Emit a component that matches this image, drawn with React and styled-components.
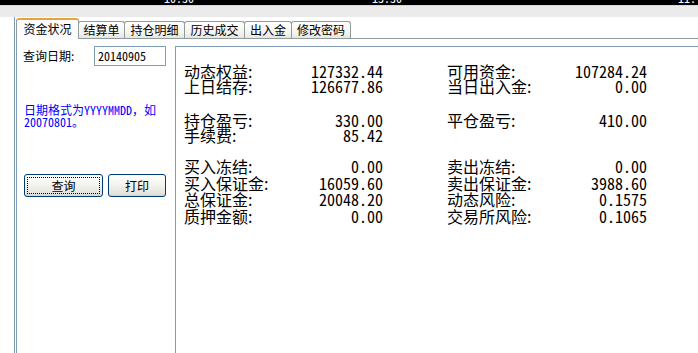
import React from "react";
import styled, { createGlobalStyle } from "styled-components";

const CJK = `"Noto Sans CJK SC", "Noto Sans", sans-serif`;
const MONO = `"Noto Sans Mono CJK SC", "Liberation Mono", monospace`;

const GlobalStyle = createGlobalStyle`
	html, body {
		margin: 0;
		padding: 0;
		background: #fff;
		overflow: hidden;
	}
	body {
		font-family: ${CJK};
	}
`;

const Screen = styled.div`
	width: 698px;
	height: 353px;
	display: flex;
	flex-direction: column;
	overflow: hidden;
	background: #fff;
`;

const ChartStrip = styled.div`
	height: 5px;
	background: #000;
	overflow: hidden;
	display: flex;
	flex-shrink: 0;
`;

const AxisLabel = styled.span`
	color: #fff;
	font: 12px/12px ${MONO};
	margin-top: -8px;
	margin-left: ${props => props.$left}px;
`;

const GreyBand = styled.div`
	height: 12px;
	flex-shrink: 0;
	background: #ebebeb;
	border-top: 1px solid #d8d8d8;
	box-sizing: border-box;
`;

const Frame = styled.div`
	flex: 1;
	display: flex;
	margin-left: 14px;
	border-left: 1px solid #7f9db9;
	padding-left: 1px;
`;

const TabControl = styled.div`
	flex: 1;
	display: flex;
	flex-direction: column;
`;

const TabStrip = styled.div`
	height: 21px;
	display: flex;
	align-items: flex-end;
	border-bottom: 1px solid #919b9c;
	flex-shrink: 0;
`;

const Tab = styled.div`
	box-sizing: border-box;
	width: ${props => props.$width}px;
	height: ${props => (props.$active ? 21 : 17)}px;
	margin-bottom: ${props => (props.$active ? -1 : 0)}px;
	display: flex;
	align-items: center;
	justify-content: center;
	font: 12px/12px ${CJK};
	color: #000;
	border: 1px solid #919b9c;
	border-bottom: none;
	border-radius: 3px 3px 0 0;
	background: ${props =>
		props.$active ? "#fcfcfe" : "linear-gradient(#ffffff, #f3f3ef 70%, #e6e6e0)"};
	${props =>
		props.$active
			? `border-top: 2px solid #e8a23c;
			padding-bottom: 1px;
			z-index: 1;`
			: `margin-left: -1px;`};
`;

const TabPage = styled.div`
	flex: 1;
	display: flex;
	border-left: 1px solid #7f9db9;
`;

const QueryPanel = styled.div`
	width: 158px;
	flex-shrink: 0;
	display: flex;
	flex-direction: column;
	padding: 7px 0 0 6px;
	box-sizing: border-box;
`;

const DateRow = styled.div`
	display: flex;
	align-items: center;
	height: 20px;
`;

const FieldLabel = styled.span`
	font: 12px/12px ${CJK};
	color: #000;
	width: 71px;
`;

const DateInput = styled.div`
	box-sizing: border-box;
	width: 72px;
	height: 20px;
	border: 1px solid #7f9db9;
	padding-left: 3px;
	font: 12px/18px ${MONO};
	color: #000;
	background: #fff;
`;

const Hint = styled.div`
	margin-top: 38px;
	margin-left: 1px;
	color: #0000ff;
	font: 12px/12px ${CJK};
`;

const HintMono = styled.span`
	font-family: ${MONO};
`;

const ButtonRow = styled.div`
	display: flex;
	gap: 5px;
	margin-top: 46px;
	margin-left: 1px;
`;

const Button = styled.div`
	position: relative;
	box-sizing: border-box;
	width: ${props => props.$width}px;
	height: 23px;
	border: 1px solid #003c74;
	border-radius: 3px;
	background: linear-gradient(#ffffff, #f4f4f0 45%, #e3e3db 90%, #d6d0c5);
	display: flex;
	align-items: center;
	justify-content: center;
	font: 12px/12px ${CJK};
	color: #000;
	${props =>
		props.$focused
			? `&::after {
				content: "";
				position: absolute;
				inset: 2px;
				border: 1px dotted #000;
			}`
			: ""};
`;

const SummaryPanel = styled.div`
	flex: 1;
	margin-top: 7px;
	border-left: 1px solid #7f9db9;
	border-top: 1px solid #7f9db9;
	padding: 17px 0 0 8px;
`;

const Group = styled.div`
	display: grid;
	grid-template-columns: 110px 89px 64px 110px 90px;
	grid-auto-rows: ${props => props.$row}px;
	margin-top: ${props => props.$gap}px;
`;

const Label = styled.span`
	font: 16px/${props => props.$row}px ${CJK};
	color: #000;
	white-space: nowrap;
`;

const Value = styled.span`
	font: 16px/${props => props.$row}px ${MONO};
	color: #000;
	text-align: right;
	white-space: nowrap;
`;

const groups = [
	{
		gap: 0,
		row: 15,
		rows: [
			["动态权益:", "127332.44", "可用资金:", "107284.24"],
			["上日结存:", "126677.86", "当日出入金:", "0.00"],
		],
	},
	{
		gap: 19,
		row: 15,
		rows: [
			["持仓盈亏:", "330.00", "平仓盈亏:", "410.00"],
			["手续费:", "85.42", "", ""],
		],
	},
	{
		gap: 15,
		row: 16.5,
		rows: [
			["买入冻结:", "0.00", "卖出冻结:", "0.00"],
			["买入保证金:", "16059.60", "卖出保证金:", "3988.60"],
			["总保证金:", "20048.20", "动态风险:", "0.1575"],
			["质押金额:", "0.00", "交易所风险:", "0.1065"],
		],
	},
];

const tabs = [
	{ name: "资金状况", width: 63 },
	{ name: "结算单", width: 47 },
	{ name: "持仓明细", width: 61 },
	{ name: "历史成交", width: 61 },
	{ name: "出入金", width: 48 },
	{ name: "修改密码", width: 60 },
];

export default function App() {
	return (
		<Screen>
			<GlobalStyle />
			<ChartStrip>
				<AxisLabel $left={164}>10:30</AxisLabel>
				<AxisLabel $left={178}>13:30</AxisLabel>
				<AxisLabel $left={276}>11:</AxisLabel>
			</ChartStrip>
			<GreyBand />
			<Frame>
				<TabControl>
					<TabStrip>
						{tabs.map((tab, i) => (
							<Tab key={tab.name} $width={tab.width} $active={i === 0}>
								{tab.name}
							</Tab>
						))}
					</TabStrip>
					<TabPage>
						<QueryPanel>
							<DateRow>
								<FieldLabel>查询日期:</FieldLabel>
								<DateInput>20140905</DateInput>
							</DateRow>
							<Hint>
								日期格式为<HintMono>YYYYMMDD</HintMono>，如
								<br />
								<HintMono>20070801</HintMono>。
							</Hint>
							<ButtonRow>
								<Button $width={79} $focused>查询</Button>
								<Button $width={58}>打印</Button>
							</ButtonRow>
						</QueryPanel>
						<SummaryPanel>
							{groups.map((g, gi) => (
								<Group key={gi} $gap={g.gap} $row={g.row}>
									{g.rows.map((r, ri) => (
										<React.Fragment key={ri}>
											<Label $row={g.row}>{r[0]}</Label>
											<Value $row={g.row}>{r[1]}</Value>
											<span />
											<Label $row={g.row}>{r[2]}</Label>
											<Value $row={g.row}>{r[3]}</Value>
										</React.Fragment>
									))}
								</Group>
							))}
						</SummaryPanel>
					</TabPage>
				</TabControl>
			</Frame>
		</Screen>
	);
}
